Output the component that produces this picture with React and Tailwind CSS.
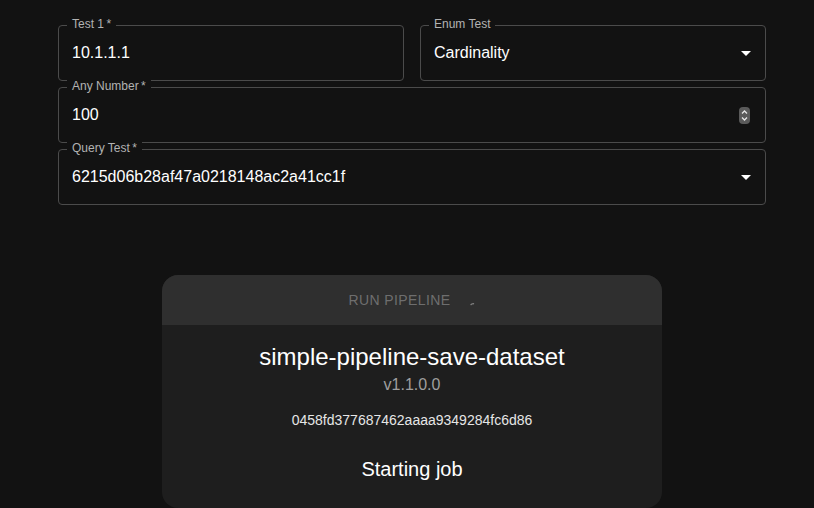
import { useState } from 'react';

// Kotak input bergaya "outlined" dengan label di atas garis tepi
function OutlinedField({ label, required, value, right, className = '' }) {
  return (
    <div className={`relative h-[56px] rounded-[4px] border border-[#4b4b4b] ${className}`}>
      <label className="absolute -top-[10px] left-[8px] bg-[#121212] px-[5px] text-[12px] leading-[16px] text-[#b3b3b3]">
        {label}
        {required && <span>{'\u2009*'}</span>}
      </label>
      <div className="flex h-full items-center pl-[13px] pr-[8px]">
        <span className="flex-1 text-[16px] text-white">{value}</span>
        {right}
      </div>
    </div>
  );
}

function DropArrow() {
  return (
    <svg width="24" height="24" viewBox="0 0 24 24" className="mr-[-1px] text-white">
      <path d="M7 10l5 5 5-5z" fill="currentColor" />
    </svg>
  );
}

function Spinner() {
  return (
    <svg width="11" height="17" viewBox="0 0 11 17" className="mr-[7px]">
      <rect x="0" y="0" width="11" height="17" rx="4" fill="#5a5a5a" />
      <path d="M3 6.5l2.5-2.5 2.5 2.5" stroke="#e6e6e6" strokeWidth="1.3" fill="none" />
      <path d="M3 10.5l2.5 2.5 2.5-2.5" stroke="#e6e6e6" strokeWidth="1.3" fill="none" />
    </svg>
  );
}

export default function App() {
  const [status] = useState('Starting job');

  return (
    <div className="min-h-screen bg-[#121212] font-['Liberation_Sans',Arial,sans-serif]">
      <div className="pl-[58px] pr-[48px] pt-[25px]">
        <div className="grid grid-cols-2 gap-x-[16px]">
          <OutlinedField label="Test 1" required value="10.1.1.1" />
          <OutlinedField label="Enum Test" value="Cardinality" right={<DropArrow />} />
        </div>
        <OutlinedField className="mt-[6px]" label="Any Number" required value="100" right={<Spinner />} />
        <OutlinedField className="mt-[6px]" label="Query Test" required value="6215d06b28af47a0218148ac2a41cc1f" right={<DropArrow />} />
      </div>

      {/* Kartu untuk menjalankan pipeline */}
      <div className="ml-[162px] mt-[70px] w-[500px] overflow-hidden rounded-[16px] bg-[#1e1e1e]">
        <div className="flex h-[50px] items-center justify-center gap-[15px] bg-[#2f2f2f] pl-[6px]">
          <span className="text-[14px] tracking-[0.4px] text-[#6e6e6e]">RUN PIPELINE</span>
          <svg width="16" height="16" viewBox="0 0 16 16">
            <path d="M5 12.6 Q6.5 11.5 7.5 11.7" stroke="#7a7a7a" strokeWidth="1.4" fill="none" strokeLinecap="round" />
          </svg>
        </div>
        <div className="flex h-[183px] flex-col items-center pt-[16px] text-center">
          <div className="text-[24px] leading-[32px] text-white">simple-pipeline-save-dataset</div>
          <div className="mt-0 text-[16px] leading-[24px] text-[#9e9e9e]">v1.1.0.0</div>
          <div className="mt-[13px] text-[14px] leading-[20px] text-[#e6e6e6]">0458fd377687462aaaa9349284fc6d86</div>
          <div className="mt-[25px] text-[20px] leading-[28px] text-white">{status}</div>
        </div>
      </div>
    </div>
  );
}
